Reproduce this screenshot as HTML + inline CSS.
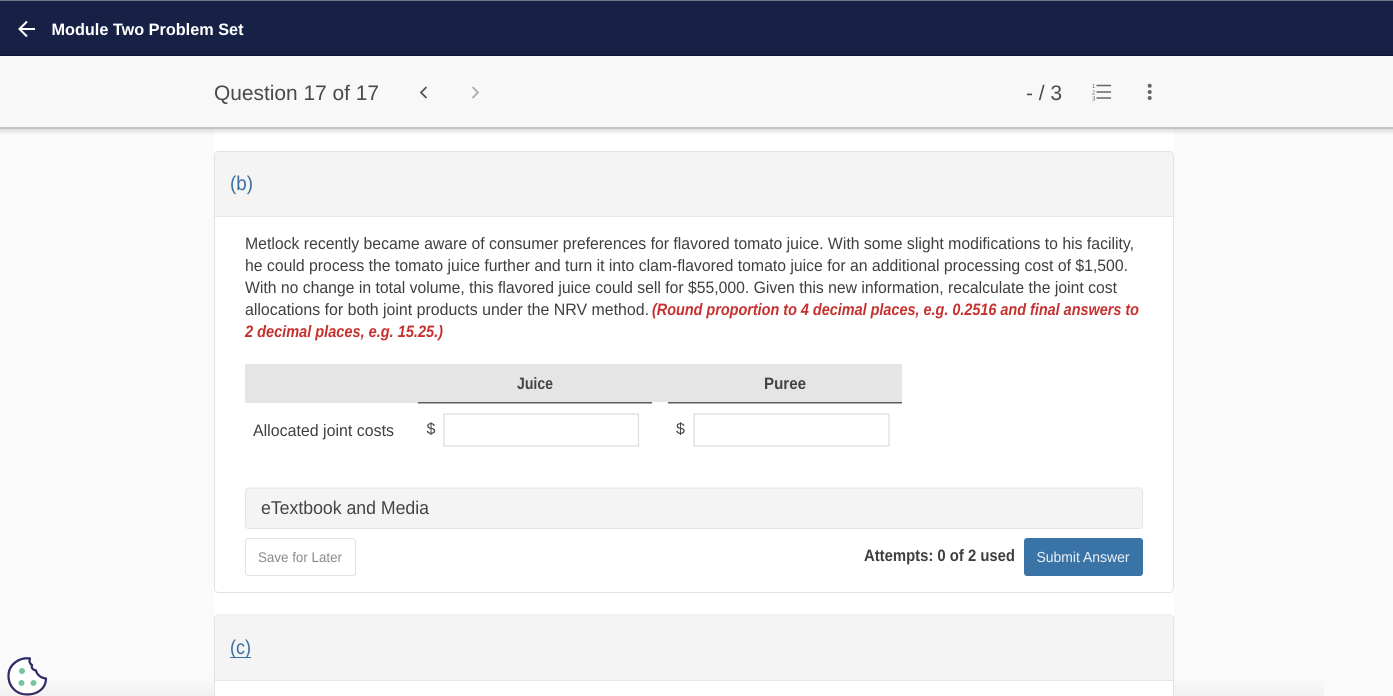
<!DOCTYPE html>
<html lang="en">
<head>
<meta charset="utf-8">
<title>Module Two Problem Set</title>
<style>
html,body{margin:0;padding:0;width:1393px;height:696px;overflow:hidden;background:#fafafa}
svg{display:block;position:absolute;left:0;top:0}
text{font-family:"Liberation Sans",sans-serif;text-rendering:geometricPrecision}
</style>
</head>
<body>
<svg width="1393" height="696" viewBox="0 0 1393 696" xmlns="http://www.w3.org/2000/svg">
<defs>
<linearGradient id="sh" x1="0" y1="0" x2="0" y2="1"><stop offset="0" stop-color="#000" stop-opacity=".14"/><stop offset="1" stop-color="#000" stop-opacity="0"/></linearGradient>
<linearGradient id="bt" x1="0" y1="0" x2="0" y2="1"><stop offset="0" stop-color="#000" stop-opacity="0"/><stop offset="1" stop-color="#000" stop-opacity=".035"/></linearGradient>
</defs>
<rect width="1393" height="696" fill="#fafafa"/>
<rect x="214" y="128" width="960" height="568" fill="#fff"/>
<rect x="1174" y="128" width="219" height="568" fill="#fafafa"/>
<rect x="0" y="676" width="214" height="20" fill="url(#bt)"/>
<rect x="1174" y="676" width="150" height="20" fill="url(#bt)"/>

<!-- top bar -->
<rect width="1393" height="56" fill="#172146"/>
<rect width="1393" height="1" fill="#6f7486"/>
<rect y="55" width="1393" height="1" fill="#0e1533"/>
<rect y="56" width="1393" height="72" fill="#f8f8f8"/>
<rect y="127" width="1393" height="1.5" fill="#c4c4c4"/>
<rect y="128" width="1393" height="7" fill="url(#sh)"/>
<path d="M35 29H20M27 21.5 19.5 29 27 36.500" fill="none" stroke="#fff" stroke-width="2"/>
<text x="51.500" y="35" font-size="16.500" font-weight="700" fill="#fff" textLength="192" lengthAdjust="spacingAndGlyphs">Module Two Problem Set</text>
<text x="214" y="100" font-size="21" fill="#4a4a4a" textLength="165" lengthAdjust="spacingAndGlyphs">Question 17 of 17</text>
<path d="M426.500 87 421 92.500 426.500 98" fill="none" stroke="#555" stroke-width="1.800"/>
<path d="M472.500 87 478 92.500 472.500 98" fill="none" stroke="#aaa" stroke-width="1.800"/>
<text x="1026" y="100" font-size="21" fill="#4a4a4a" textLength="36" lengthAdjust="spacing">- / 3</text>
<path d="M1096.500 85.500h14.500M1096.500 92h14.500M1096.500 98h14.500" stroke="#666" stroke-width="1.600" fill="none"/>
<text x="1092" y="88" font-size="6" fill="#666">1</text><text x="1092" y="94.500" font-size="6" fill="#666">2</text><text x="1092" y="100.500" font-size="6" fill="#666">3</text>
<circle cx="1149.700" cy="85.700" r="2" fill="#666"/><circle cx="1149.700" cy="92" r="2" fill="#666"/><circle cx="1149.700" cy="98" r="2" fill="#666"/>

<!-- card b -->
<rect x="214.500" y="151.500" width="959" height="441" rx="4" fill="#fff" stroke="#e2e2e2"/>
<path d="M215 216V155a3 3 0 0 1 3-3H1170a3 3 0 0 1 3 3V216Z" fill="#f4f4f4"/>
<rect x="215" y="216" width="958" height="1" fill="#e6e6e6"/>
<text x="230" y="190" font-size="20" fill="#3c6e9c" textLength="23" lengthAdjust="spacingAndGlyphs">(b)</text>

<g font-size="16.500" fill="#3f3f3f">
<text x="245" y="249" textLength="889" lengthAdjust="spacingAndGlyphs">Metlock recently became aware of consumer preferences for flavored tomato juice. With some slight modifications to his facility,</text>
<text x="245" y="271" textLength="883" lengthAdjust="spacingAndGlyphs">he could process the tomato juice further and turn it into clam-flavored tomato juice for an additional processing cost of $1,500.</text>
<text x="245" y="293" textLength="872" lengthAdjust="spacingAndGlyphs">With no change in total volume, this flavored juice could sell for $55,000. Given this new information, recalculate the joint cost</text>
<text x="245" y="315" textLength="404" lengthAdjust="spacingAndGlyphs">allocations for both joint products under the NRV method.</text>
</g>
<g font-size="16.500" font-weight="700" font-style="italic" fill="#c5312f">
<text x="652" y="315" textLength="487" lengthAdjust="spacingAndGlyphs">(Round proportion to 4 decimal places, e.g. 0.2516 and final answers to</text>
<text x="245" y="337" textLength="198" lengthAdjust="spacingAndGlyphs">2 decimal places, e.g. 15.25.)</text>
</g>

<!-- table -->
<rect x="245" y="364" width="657" height="39" fill="#e5e5e6"/>
<rect x="418" y="402" width="234" height="1.500" fill="#5d5d5d"/>
<rect x="668" y="402" width="234" height="1.500" fill="#5d5d5d"/>
<rect x="652" y="402" width="16" height="2" fill="#fff"/>
<text x="517" y="389" font-size="16.500" font-weight="700" fill="#444" textLength="36" lengthAdjust="spacingAndGlyphs">Juice</text>
<text x="764" y="389" font-size="16.500" font-weight="700" fill="#444" textLength="42" lengthAdjust="spacingAndGlyphs">Puree</text>
<text x="253" y="436" font-size="16.500" fill="#3f3f3f" textLength="141" lengthAdjust="spacingAndGlyphs">Allocated joint costs</text>
<text x="426.500" y="434" font-size="16" fill="#444">$</text>
<text x="676" y="434" font-size="16" fill="#444">$</text>
<rect x="444" y="414" width="194.500" height="32" fill="#fff" stroke="#dcdcdc" stroke-width="1.200"/>
<rect x="694" y="414" width="195" height="32" fill="#fff" stroke="#dcdcdc" stroke-width="1.200"/>

<!-- etextbook -->
<rect x="245.500" y="488" width="897" height="40.500" rx="3" fill="#f4f4f4" stroke="#e4e4e4"/>
<text x="261" y="514" font-size="18.500" fill="#444" textLength="168" lengthAdjust="spacingAndGlyphs">eTextbook and Media</text>

<!-- actions -->
<rect x="245.500" y="538.500" width="110" height="37" rx="3" fill="#fff" stroke="#e2e2e2"/>
<text x="258" y="562" font-size="14" fill="#8a8a8a" textLength="84" lengthAdjust="spacingAndGlyphs">Save for Later</text>
<text x="864" y="561" font-size="16.500" font-weight="700" fill="#3f3f3f" textLength="151" lengthAdjust="spacingAndGlyphs">Attempts: 0 of 2 used</text>
<rect x="1024" y="538" width="119" height="38" rx="3" fill="#3a74a6"/>
<text x="1036.500" y="562" font-size="14.500" fill="#e8f0f7" textLength="93" lengthAdjust="spacingAndGlyphs">Submit Answer</text>

<!-- card c -->
<path d="M214.500 696V619a4 4 0 0 1 4-4H1169.500a4 4 0 0 1 4 4V696" fill="#fff" stroke="#e2e2e2"/>
<path d="M215 680V619a3 3 0 0 1 3-3H1170a3 3 0 0 1 3 3V680Z" fill="#f4f4f4"/>
<rect x="215" y="680" width="958" height="1" fill="#e6e6e6"/>
<text x="230" y="654" font-size="20" fill="#3c6e9c" textLength="21" lengthAdjust="spacingAndGlyphs">(c)</text>
<rect x="230" y="657" width="21" height="1" fill="#3c6e9c"/>

<!-- cookie -->
<path d="M30 658.500C20 657 9 664 8.500 675C8 686 16 694.500 27 694.500C38 694.500 46 688 46 678.500C41 678 37 675 36 670.500C33 670 31 668 32 665C29.500 663.500 29 661 30 658.500Z" fill="#fff" stroke="#2e2a66" stroke-width="2.200" stroke-linejoin="round"/>
<circle cx="22" cy="671" r="3" fill="#74c69d"/>
<circle cx="21.500" cy="683" r="3" fill="#74c69d"/>
<circle cx="33.500" cy="683" r="3" fill="#74c69d"/>
</svg>
</body>
</html>
